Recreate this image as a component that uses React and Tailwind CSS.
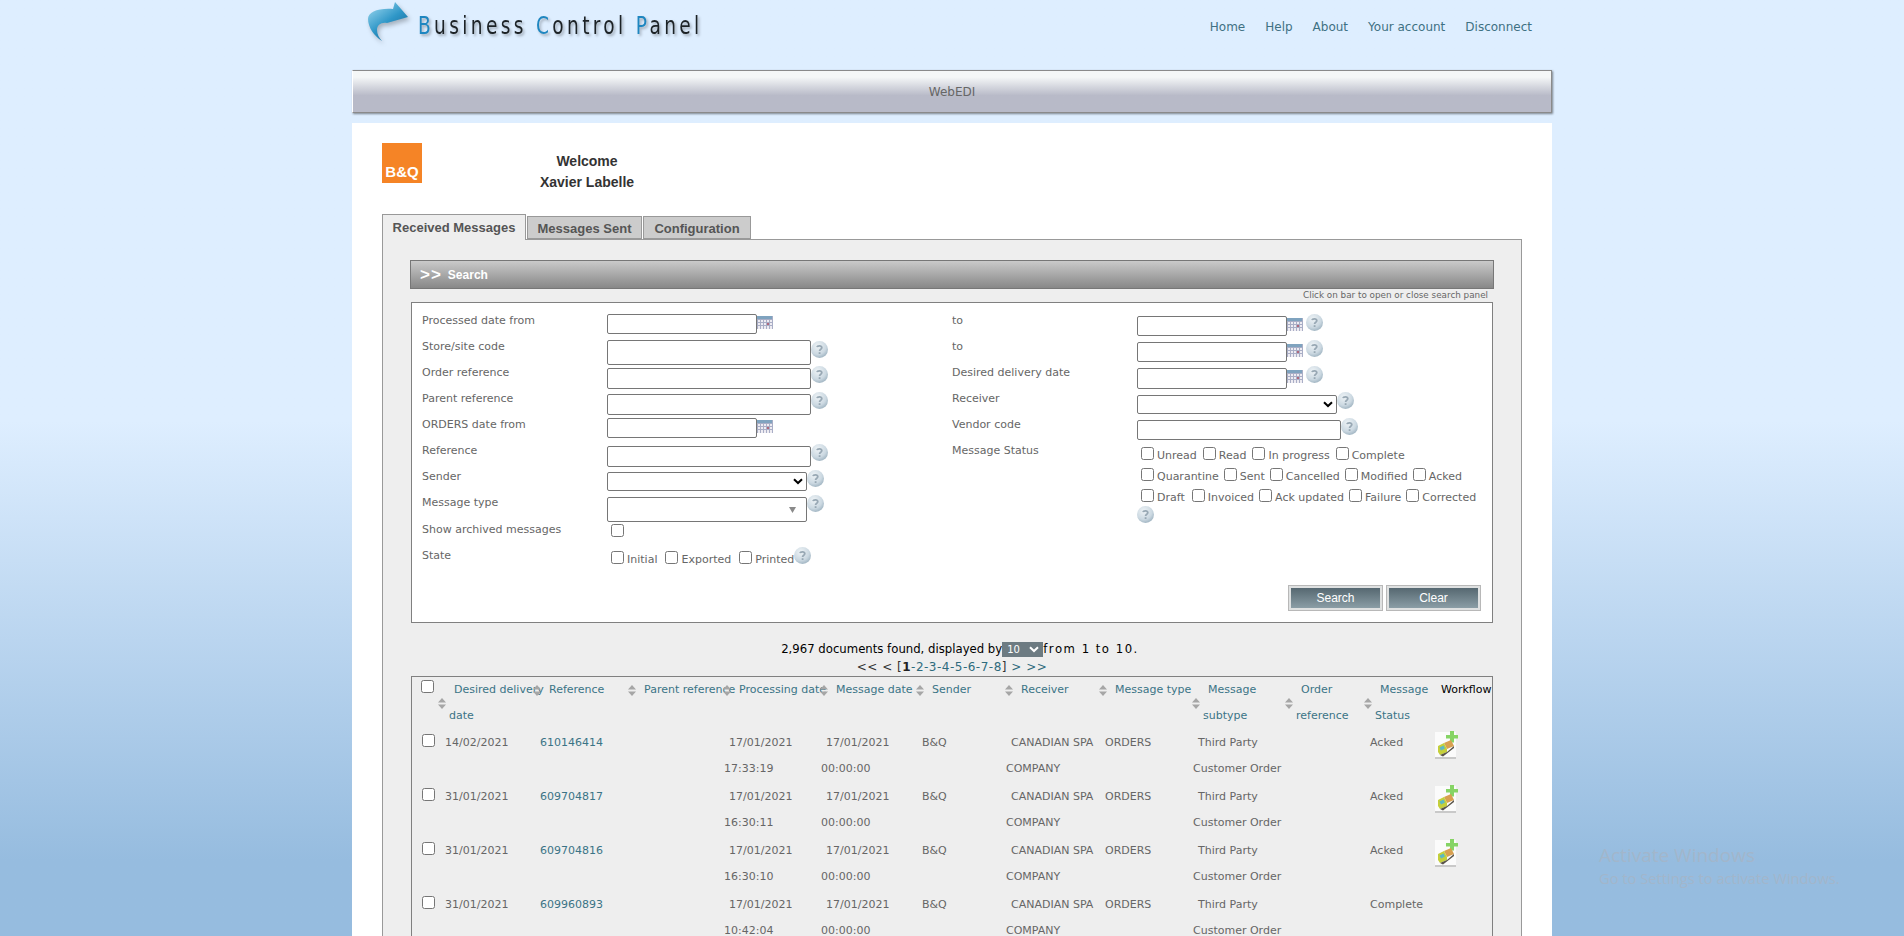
const DATE_ROWS = [
  ['14/02/2021', '610146414', '17:33:19', 'Acked', true],
  ['31/01/2021', '609704817', '16:30:11', 'Acked', true],
  ['31/01/2021', '609704816', '16:30:10', 'Acked', true],
  ['31/01/2021', '609960893', '10:42:04', 'Complete', false],
]

function HelpIcon({ className = '' }) {
  return (
    <svg viewBox="0 0 17 17" className={`w-[17px] h-[17px] shrink-0 ${className}`}>
      <defs>
        <radialGradient id="helpBall" cx="40%" cy="30%" r="75%">
          <stop offset="0%" stopColor="#eef3f6" />
          <stop offset="65%" stopColor="#cbd8e1" />
          <stop offset="100%" stopColor="#9bb0be" />
        </radialGradient>
      </defs>
      <circle cx="8.5" cy="8.5" r="8.5" fill="url(#helpBall)" />
      <path d="M6 6.2C6.3 4.6 10.6 4.4 10.8 6.6C10.9 8.4 8.6 8.2 8.6 10" fill="none" stroke="#98a8b4" strokeWidth="1.8" />
      <rect x="7.7" y="11.2" width="1.8" height="1.8" fill="#98a8b4" />
    </svg>
  )
}

function CalendarIcon() {
  return (
    <svg viewBox="0 0 16 13" className="w-4 h-[13px] shrink-0">
      <rect width="16" height="13" fill="#eeecf2" />
      <rect width="16" height="3" fill="#7fa3bf" />
      <path d="M0 3.5H16M0 6.5H16M0 9.5H16M0.5 3V13M3.5 3V13M6.5 3V13M9.5 3V13M12.5 3V13M15.5 0V13" stroke="#a9aec6" strokeWidth="1" />
      <rect x="10" y="7" width="2" height="2" fill="#b0687c" />
    </svg>
  )
}

function SortIcon({ className }) {
  return (
    <svg viewBox="0 0 8 11" className={`absolute w-2 h-[11px] ${className}`}>
      <path d="M4 0L8 4.4H0ZM4 11L0 6.6H8Z" fill="#a6a6a6" />
    </svg>
  )
}

function Check({ className = '' }) {
  return (
    <span className={`inline-block w-[13px] h-[13px] shrink-0 bg-white border border-[#767676] rounded-[2.5px] ${className}`} />
  )
}

function TextBox({ className }) {
  return <span className={`block bg-white border border-[#767676] rounded-[2px] shrink-0 ${className}`} />
}

function Chevron() {
  return (
    <svg viewBox="0 0 10 7" className="absolute right-[4px] top-[6px] w-[10px] h-[7px]">
      <path d="M1 1.2L5 5L9 1.2" fill="none" stroke="#000" strokeWidth="2" />
    </svg>
  )
}

function Row({ label, children, height = 'h-[26px]' }) {
  return (
    <div className={`flex ${height}`}>
      <div className="w-[185px] shrink-0 leading-[14px] text-[#666]">{label}</div>
      <div className="flex items-start">{children}</div>
    </div>
  )
}

function CheckLabel({ label, className = '' }) {
  return (
    <span className={`flex items-start whitespace-nowrap ${className}`}>
      <Check />
      <span className="ml-[3px] mt-[2px] leading-[14px] text-[#666]">{label}</span>
    </span>
  )
}

function SearchForm() {
  return (
    <div className="relative h-[321px] mx-[1px] border border-[#808080] bg-white pl-[10px] pt-[11px] text-[11px] font-['DejaVu_Sans',sans-serif]">
      <div className="flex">
        <div className="w-[530px] shrink-0">
          <Row label="Processed date from">
            <TextBox className="w-[150px] h-[20px]" />
            <span className="mt-[2px]"><CalendarIcon /></span>
          </Row>
          <Row label="Store/site code">
            <TextBox className="w-[204px] h-[25px]" />
            <HelpIcon className="mt-[1px]" />
          </Row>
          <Row label="Order reference">
            <TextBox className="w-[204px] h-[21px] mt-[2px]" />
            <HelpIcon />
          </Row>
          <Row label="Parent reference">
            <TextBox className="w-[204px] h-[21px] mt-[2px]" />
            <HelpIcon />
          </Row>
          <Row label="ORDERS date from">
            <TextBox className="w-[150px] h-[20px]" />
            <span className="mt-[2px]"><CalendarIcon /></span>
          </Row>
          <Row label="Reference">
            <TextBox className="w-[204px] h-[21px] mt-[2px]" />
            <HelpIcon />
          </Row>
          <Row label="Sender">
            <span className="relative block mt-[2px]">
              <TextBox className="w-[200px] h-[19px]" />
              <Chevron />
            </span>
            <HelpIcon />
          </Row>
          <Row label="Message type" height="h-[27px]">
            <span className="relative block mt-[1px]">
              <TextBox className="w-[200px] h-[25px]" />
              <svg viewBox="0 0 7 6" className="absolute right-[11px] top-[10px] w-[7px] h-[6px]">
                <path d="M0 0H7L3.5 6Z" fill="#8a8a8a" />
              </svg>
            </span>
            <HelpIcon className="-mt-[1px]" />
          </Row>
          <Row label="Show archived messages">
            <Check className="ml-[4px] mt-[1px]" />
          </Row>
          <Row label="State">
            <div className="flex items-start pl-[4px] mt-[2px]">
              <CheckLabel label="Initial" />
              <CheckLabel label="Exported" className="ml-[8px]" />
              <CheckLabel label="Printed" className="ml-[8px]" />
              <HelpIcon className="-mt-[4px]" />
            </div>
          </Row>
        </div>
        <div className="flex-1">
          <Row label="to">
            <TextBox className="w-[150px] h-[20px] mt-[2px]" />
            <span className="mt-[4px]"><CalendarIcon /></span>
            <HelpIcon className="ml-[3px]" />
          </Row>
          <Row label="to">
            <TextBox className="w-[150px] h-[20px] mt-[2px]" />
            <span className="mt-[4px]"><CalendarIcon /></span>
            <HelpIcon className="ml-[3px]" />
          </Row>
          <Row label="Desired delivery date">
            <TextBox className="w-[150px] h-[21px] mt-[2px]" />
            <span className="mt-[4px]"><CalendarIcon /></span>
            <HelpIcon className="ml-[3px]" />
          </Row>
          <Row label="Receiver">
            <span className="relative block mt-[3px]">
              <TextBox className="w-[200px] h-[19px]" />
              <Chevron />
            </span>
            <HelpIcon />
          </Row>
          <Row label="Vendor code">
            <TextBox className="w-[204px] h-[20px] mt-[2px]" />
            <HelpIcon />
          </Row>
          <Row label="Message Status">
            <div className="w-[345px] mt-[3px] pl-[4px]">
              <div className="flex h-[21px]">
                <CheckLabel label="Unread" />
                <CheckLabel label="Read" className="ml-[6px]" />
                <CheckLabel label="In progress" className="ml-[6px]" />
                <CheckLabel label="Complete" className="ml-[6px]" />
              </div>
              <div className="flex h-[21px]">
                <CheckLabel label="Quarantine" />
                <CheckLabel label="Sent" className="ml-[5px]" />
                <CheckLabel label="Cancelled" className="ml-[5px]" />
                <CheckLabel label="Modified" className="ml-[5px]" />
                <CheckLabel label="Acked" className="ml-[5px]" />
              </div>
              <div className="flex h-[17px]">
                <CheckLabel label="Draft" />
                <CheckLabel label="Invoiced" className="ml-[7px]" />
                <CheckLabel label="Ack updated" className="ml-[5px]" />
                <CheckLabel label="Failure" className="ml-[5px]" />
                <CheckLabel label="Corrected" className="ml-[5px]" />
              </div>
              <HelpIcon className="-ml-[4px]" />
            </div>
          </Row>
        </div>
      </div>
      <div className="absolute right-[12px] bottom-[12px] flex gap-[5px]">
        <SearchButton label="Search" />
        <SearchButton label="Clear" />
      </div>
    </div>
  )
}

function SearchButton({ label }) {
  return (
    <button className="w-[93px] h-[24px] border-2 border-[#dfe1e1] outline outline-1 outline-[#b8b8b8] bg-gradient-to-b from-[#566871] to-[#8b9ea6] text-white text-[12px] font-['Liberation_Sans',sans-serif]">
      {label}
    </button>
  )
}

function Pager() {
  return (
    <div className="text-center text-[12px] leading-[18px] tracking-[0.5px] text-[#333] font-['DejaVu_Sans',sans-serif]">
      {'<< < ['}
      <span className="font-bold text-[#222]">1</span>
      <span className="text-[#2f6b7d]">-2-3-4-5-6-7-8</span>
      {'] '}
      <span className="text-[#2f6b7d]">{'> >>'}</span>
    </div>
  )
}

function Th({ children, icon, width }) {
  return (
    <th className={`relative ${width} p-0 pl-[15px] align-top text-left font-normal indent-[5px] leading-[26px] whitespace-nowrap text-[#3b7486]`}>
      {children}
      <SortIcon className={icon} />
    </th>
  )
}

function Td({ children, className = 'pl-[5px] text-[#666]' }) {
  return <td className={`p-0 indent-[5px] align-top leading-[26px] pb-[2px] whitespace-nowrap ${className}`}>{children}</td>
}

function TruckAdd() {
  return (
    <svg viewBox="0 0 24 28" className="block w-6 h-7">
      <rect x="0" y="1" width="21" height="27" fill="#c9c9c9" />
      <rect x="0" y="1" width="21" height="25" fill="#fbfbfb" />
      <path d="M15 0H19V4H23V7.5H19V11.5H15V7.5H11V4H15Z" fill="#86d465" />
      <path d="M9 12L16 9L19 15L12 18Z" fill="#d8a050" />
      <path d="M3 15L9 12L12 18L12 21L5 24L3 21Z" fill="#c5cf3a" />
      <path d="M4.5 16.5L8.5 14.5L10 17.5L6 19.5Z" fill="#5db9c4" />
      <path d="M5 24L12 21L19 15L19 17L8 25.5Z" fill="#59544a" />
    </svg>
  )
}

function ResultsTable() {
  return (
    <div className="mx-[1px] border border-[#808080] bg-[#eee] text-[11px] font-['DejaVu_Sans',sans-serif]">
      <table className="table-fixed border-collapse w-[1079px]">
        <thead>
          <tr className="h-[53px]">
            <th className="relative w-[22px] p-0 pl-[9px] pt-[3px] align-top"><Check className="block" /></th>
            <Th width="w-[95px]" icon="left-[4px] top-[21px]">Desired delivery<br />date</Th>
            <Th width="w-[95px]" icon="left-[4px] top-[8px]">Reference</Th>
            <Th width="w-[95px]" icon="left-[4px] top-[8px]">Parent reference</Th>
            <Th width="w-[97px]" icon="left-[4px] top-[8px]">Processing date</Th>
            <Th width="w-[96px]" icon="left-[4px] top-[8px]">Message date</Th>
            <Th width="w-[89px]" icon="left-[4px] top-[8px]">Sender</Th>
            <Th width="w-[94px]" icon="left-[4px] top-[8px]">Receiver</Th>
            <Th width="w-[93px]" icon="left-[4px] top-[8px]">Message type</Th>
            <Th width="w-[93px]" icon="left-[4px] top-[21px]">Message<br />subtype</Th>
            <Th width="w-[79px]" icon="left-[4px] top-[21px]">Order<br />reference</Th>
            <Th width="w-[71px]" icon="left-[4px] top-[21px]">Message<br />Status</Th>
            <th className="p-0 pl-[5px] indent-[5px] align-top text-left font-normal leading-[26px] text-black">Workflow</th>
          </tr>
        </thead>
        <tbody>
          {DATE_ROWS.map(([desired, ref, time, status, truck]) => (
            <tr key={ref} className="h-[54px]">
              <td className="p-0 pl-[10px] pt-[4px] align-top"><Check className="block" /></td>
              <Td className="pl-[6px] text-[#666]">{desired}</Td>
              <Td className="pl-[6px] text-[#3b7486]">{ref}</Td>
              <Td />
              <Td>17/01/2021<br />{time}</Td>
              <Td>17/01/2021<br />00:00:00</Td>
              <Td>B&amp;Q</Td>
              <Td>CANADIAN SPA<br />COMPANY</Td>
              <Td>ORDERS</Td>
              <Td>Third Party<br />Customer Order</Td>
              <Td />
              <Td>{status}</Td>
              <td className="p-0 pl-[4px] pt-[1px] align-top">{truck && <TruckAdd />}</td>
            </tr>
          ))}
        </tbody>
      </table>
    </div>
  )
}

export default function App() {
  return (
    <div className="relative h-screen overflow-hidden bg-gradient-to-b from-[#deeeff] from-[45%] to-[#96bcdf] to-[92%]">
      <div className="w-[1200px] mx-auto">
        <header className="flex justify-between h-[70px]">
          <div className="flex items-start pl-[16px]">
            <svg viewBox="0 0 44 46" className="w-11 h-[46px] shrink-0 drop-shadow-[2px_3px_2px_rgba(0,0,0,0.25)]">
              <defs>
                <linearGradient id="arrowFill" x1="0.1" y1="0.1" x2="0.7" y2="0.9">
                  <stop offset="0%" stopColor="#8fd0ea" />
                  <stop offset="55%" stopColor="#2f97c8" />
                  <stop offset="100%" stopColor="#1b6f9e" />
                </linearGradient>
              </defs>
              <path d="M27 2L40 17L19 23C13 22 9 25 9 30C9 34 11 38 14 41C6 36 0 27 0 19C0 12 10 8 25 9Z" fill="url(#arrowFill)" />
            </svg>
            <div className="ml-[6px] mt-[14px] origin-left scale-x-[0.86] text-[24px] leading-[24px] tracking-[3.9px] text-[#1c2226] font-['DejaVu_Sans_Condensed',sans-serif] [text-shadow:2px_2px_3px_rgba(0,0,0,0.3)] whitespace-nowrap">
              <span className="text-[#1e86c0]">B</span>usiness{' '}
              <span className="text-[#1e86c0]">C</span>ontrol{' '}
              <span className="text-[#1e86c0]">P</span>anel
            </div>
          </div>
          <nav className="flex gap-[20px] pr-[20px] pt-[19px] text-[12px] leading-[16px] text-[#3f7183] font-['DejaVu_Sans',sans-serif]">
            <span>Home</span>
            <span>Help</span>
            <span>About</span>
            <span>Your account</span>
            <span>Disconnect</span>
          </nav>
        </header>

        <div className="flex items-center justify-center h-[43px] pt-[1px] border border-[#8a8a8a] border-l-white bg-gradient-to-b from-[#f5f7f7] from-15% to-[#b8bac8] to-60% shadow-[1px_1px_2px_rgba(0,0,0,0.45)] text-[12px] text-[#666] font-['DejaVu_Sans',sans-serif]">
          WebEDI
        </div>

        <main className="mt-[10px] h-[900px] bg-white px-[30px] pt-[20px]">
          <div className="flex h-[71px]">
            <div className="flex justify-center w-10 h-10 pt-[20px] bg-[#f58426] text-white text-[15px] leading-[18px] font-bold font-['Liberation_Sans',sans-serif]">B&amp;Q</div>
            <div className="w-[330px] pt-[8px] text-center text-[14px] leading-[21px] font-bold text-[#333] font-['Liberation_Sans',sans-serif]">
              <div>Welcome</div>
              <div>Xavier Labelle</div>
            </div>
          </div>

          <div className="flex items-end gap-[1px] h-[25px] font-bold text-[13px] text-[#555] font-['Liberation_Sans',sans-serif]">
            <div className="flex items-center justify-center w-[144px] h-[26px] pt-[1px] -mb-[1px] relative bg-[#eee] border border-[#999] border-b-0">Received Messages</div>
            <div className="flex items-center justify-center w-[115px] h-[23px] pt-[3px] bg-[#ccc] border border-[#999]">Messages Sent</div>
            <div className="flex items-center justify-center w-[108px] h-[23px] pt-[3px] bg-[#ccc] border border-[#999]">Configuration</div>
          </div>

          <section className="h-[800px] border border-[#999] bg-[#eee] px-[27px] pt-[20px]">
            <div className="flex items-center h-[29px] border border-[#777] bg-gradient-to-b from-[#cacaca] to-[#888] pl-[9px] text-white text-[12px] font-bold font-['Liberation_Sans',sans-serif]">
              <span className="tracking-[1px] text-[17px] leading-none mr-[6px]">&gt;&gt;</span>
              Search
            </div>
            <div className="h-[13px] pr-[6px] text-right text-[8.8px] leading-[12px] text-[#666] font-['DejaVu_Sans',sans-serif]">Click on bar to open or close search panel</div>
            <SearchForm />
            <div className="mt-[18px] flex items-center justify-center h-[17px] pl-[16px] text-[11.7px] text-black font-['DejaVu_Sans',sans-serif]">
              2,967 documents found, displayed by
              <span className="relative block w-[41px] h-[15px] bg-[#6d7b82] text-white text-[10px] leading-[15px] pl-[5px]">
                10
                <svg viewBox="0 0 10 7" className="absolute right-[4px] top-[4px] w-[10px] h-[7px]">
                  <path d="M1 1.2L5 5L9 1.2" fill="none" stroke="#fff" strokeWidth="2" />
                </svg>
              </span>
              <span className="tracking-[1.5px]">from 1 to 10.</span>
            </div>
            <Pager />
            <ResultsTable />
          </section>
        </main>
      </div>

      <div className="absolute left-[1599px] top-[842px] text-[#a2b6cb] font-['Open_Sans',sans-serif]">
        <div className="text-[19px] leading-[26px]">Activate Windows</div>
        <div className="text-[14.7px] leading-[20px]">Go to Settings to activate Windows.</div>
      </div>
    </div>
  )
}
